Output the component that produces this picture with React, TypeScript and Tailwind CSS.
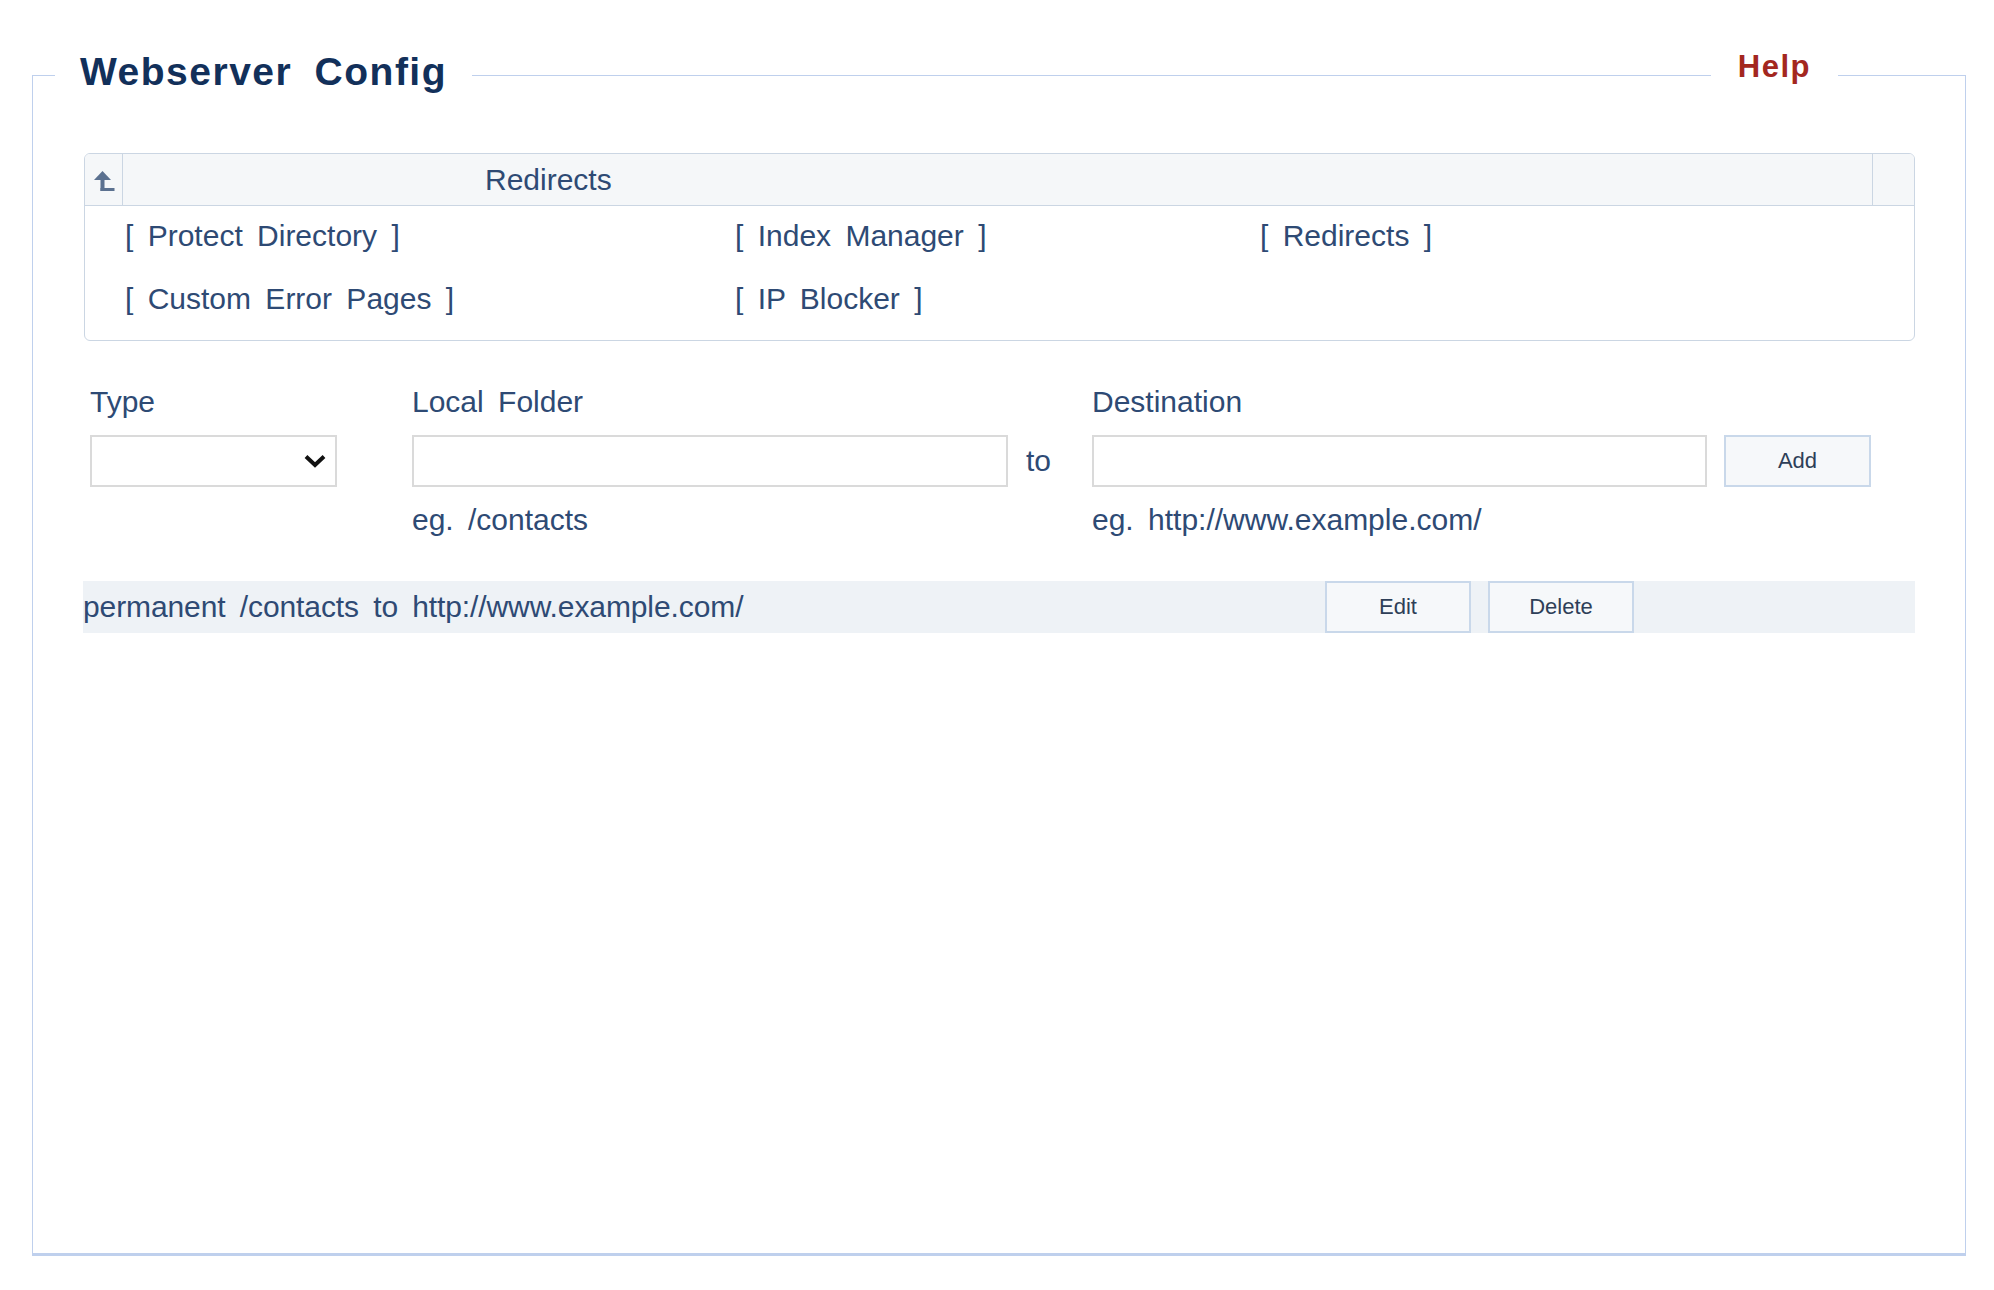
import React from "react";

const links = [
  "Protect Directory",
  "Index Manager",
  "Redirects",
  "Custom Error Pages",
  "IP Blocker",
];

function UpIcon() {
  return (
    <svg width="24" height="26" viewBox="0 0 24 26" className="mt-[2px]">
      <path d="M10.5 3 L19 12 L2 12 Z" fill="#5b7190" />
      <rect x="8.5" y="11" width="4" height="12" fill="#5b7190" />
      <rect x="8.5" y="20" width="14" height="3" fill="#5b7190" />
    </svg>
  );
}

function Chevron() {
  return (
    <svg width="24" height="14" viewBox="0 0 24 14">
      <polyline points="3,2.5 12,11 21,2.5" fill="none" stroke="#111" strokeWidth="4" />
    </svg>
  );
}

export default function App() {
  return (
    <div className="min-h-screen bg-white font-['Liberation_Sans',Arial,sans-serif] text-[#2e4a74] [word-spacing:6px]">
      <div className="ml-[32px] w-[1934px] pt-[50px]">
        {/* Legend row */}
        <div className="flex h-[46px] items-start">
          <div className="h-[21px] w-[23px] self-end border-l border-t border-[#bfd0ed]" />
          <h1 className="mt-[2px] px-[25px] text-[39px] font-bold leading-[39px] tracking-[1.5px] text-[#12305a] [word-spacing:10px]">
            Webserver Config
          </h1>
          <div className="h-[21px] flex-1 self-end border-t border-[#bfd0ed]" />
          <a className="mt-[2px] px-[27px] text-[31px] font-bold leading-[30px] tracking-[1.5px] text-[#a3271f]">
            Help
          </a>
          <div className="h-[21px] w-[128px] self-end border-r border-t border-[#bfd0ed]" />
        </div>

        <div className="h-[1160px] border-x border-b-[3px] border-[#bfd0ed] pl-[51px] pr-[50px] pt-[57px]">
          {/* Navigation box */}
          <div className="overflow-hidden rounded-[6px] border-[1.5px] border-[#cbd6e3]">
            <div className="flex h-[52px] border-b border-[#cbd6e3] bg-[#f5f7f9]">
              <div className="flex w-[38px] items-center justify-center border-r border-[#cbd6e3]">
                <UpIcon />
              </div>
              <div className="flex flex-1 items-center pl-[362px] text-[30px] leading-[40px]">
                Redirects
              </div>
              <div className="w-[42px] border-l border-[#cbd6e3]" />
            </div>
            <div className="grid grid-cols-[610px_525px_1fr] gap-y-[23px] pb-[21px] pl-[40px] pt-[10px] text-[30px] leading-[40px]">
              {links.map((l) => (
                <a key={l} className="whitespace-nowrap">
                  [ {l} ]
                </a>
              ))}
            </div>
          </div>

          {/* Add form */}
          <div className="mt-[41px] grid grid-cols-[322px_680px_1fr] grid-rows-[40px_52px_40px] gap-y-[13px] pl-[6px] text-[30px] leading-[40px]">
            <div>Type</div>
            <div>Local Folder</div>
            <div>Destination</div>

            <div className="flex h-[52px] w-[247px] items-center justify-end border-2 border-[#dadada] bg-white pr-[8px]">
              <Chevron />
            </div>
            <div className="flex items-center">
              <div className="h-[52px] w-[596px] border-2 border-[#dadada] bg-white" />
              <span className="ml-[18px]">to</span>
            </div>
            <div className="flex items-center">
              <div className="h-[52px] w-[615px] border-2 border-[#dadada] bg-white" />
              <button className="ml-[17px] h-[52px] w-[147px] border-2 border-[#c9d8ea] bg-[#f6f8fa] text-[22px] text-[#2e3f58]">
                Add
              </button>
            </div>

            <div />
            <div>eg. /contacts</div>
            <div>eg. http://www.example.com/</div>
          </div>

          {/* Existing redirect */}
          <div className="-ml-px mt-[41px] flex h-[52px] items-center bg-[#eef2f6] text-[30px] leading-[40px]">
            <span className="flex-1 tracking-[-0.1px]">permanent /contacts to http://www.example.com/</span>
            <button className="h-[52px] w-[146px] border-2 border-[#c9d8ea] bg-[#f6f8fa] text-[22px] text-[#2e3f58]">
              Edit
            </button>
            <button className="ml-[17px] mr-[281px] h-[52px] w-[146px] border-2 border-[#c9d8ea] bg-[#f6f8fa] text-[22px] text-[#2e3f58]">
              Delete
            </button>
          </div>
        </div>
      </div>
    </div>
  );
}
